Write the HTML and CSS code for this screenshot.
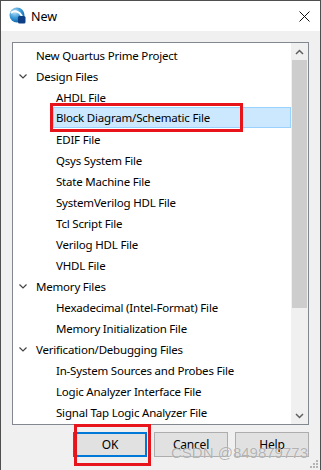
FILE: index.html
```html
<!DOCTYPE html>
<html>
<head>
<meta charset="utf-8">
<link rel="stylesheet" href="styles.css">
</head>
<body>
<div class="window">
  <div class="titlebar">
    <svg class="appicon" width="17" height="17" viewBox="0 0 17 17">
      <defs>
        <radialGradient id="g" cx="0.35" cy="0.3" r="0.8">
          <stop offset="0" stop-color="#bfe3f7"/>
          <stop offset="0.5" stop-color="#3a9ad6"/>
          <stop offset="1" stop-color="#0a5aa0"/>
        </radialGradient>
      </defs>
      <circle cx="8" cy="8" r="7.5" fill="url(#g)"/>
      <path d="M2 6 C5 3 10 4 13 9" stroke="#fff" stroke-width="2" fill="none"/>
      <rect x="9" y="9" width="7.5" height="7.5" rx="1.5" fill="#0d3f86"/>
    </svg>
    <span class="title">New</span>
    <svg class="close" width="11" height="11" viewBox="0 0 11 11">
      <path d="M0.5 0.5 L10.5 10.5 M10.5 0.5 L0.5 10.5" stroke="#111" stroke-width="1"/>
    </svg>
  </div>
  <div class="content">
    <div class="listbox">
      <div class="items">
        <div class="row lvl0"><span class="twisty"></span><span class="label">New Quartus Prime Project</span></div>
        <div class="row lvl0"><span class="twisty open"><svg width="8" height="5" viewBox="0 0 8 5"><path d="M0.5 0.5 L4 4 L7.5 0.5" stroke="#444" fill="none" stroke-width="1.2"/></svg></span><span class="label">Design Files</span></div>
        <div class="row lvl1"><span class="label">AHDL File</span></div>
        <div class="row lvl1"><span class="label selected">Block Diagram/Schematic File</span></div>
        <div class="row lvl1"><span class="label">EDIF File</span></div>
        <div class="row lvl1"><span class="label">Qsys System File</span></div>
        <div class="row lvl1"><span class="label">State Machine File</span></div>
        <div class="row lvl1"><span class="label">SystemVerilog HDL File</span></div>
        <div class="row lvl1"><span class="label">Tcl Script File</span></div>
        <div class="row lvl1"><span class="label">Verilog HDL File</span></div>
        <div class="row lvl1"><span class="label">VHDL File</span></div>
        <div class="row lvl0"><span class="twisty open"><svg width="8" height="5" viewBox="0 0 8 5"><path d="M0.5 0.5 L4 4 L7.5 0.5" stroke="#444" fill="none" stroke-width="1.2"/></svg></span><span class="label">Memory Files</span></div>
        <div class="row lvl1"><span class="label">Hexadecimal (Intel-Format) File</span></div>
        <div class="row lvl1"><span class="label">Memory Initialization File</span></div>
        <div class="row lvl0"><span class="twisty open"><svg width="8" height="5" viewBox="0 0 8 5"><path d="M0.5 0.5 L4 4 L7.5 0.5" stroke="#444" fill="none" stroke-width="1.2"/></svg></span><span class="label">Verification/Debugging Files</span></div>
        <div class="row lvl1"><span class="label">In-System Sources and Probes File</span></div>
        <div class="row lvl1"><span class="label">Logic Analyzer Interface File</span></div>
        <div class="row lvl1"><span class="label">Signal Tap Logic Analyzer File</span></div>
      </div>
      <div class="scrollbar">
        <div class="arrow"><svg width="9" height="6" viewBox="0 0 9 6"><path d="M1 5 L4.5 1.5 L8 5" stroke="#606060" fill="none" stroke-width="1.5"/></svg></div>
        <div class="track"><div class="thumb"></div></div>
        <div class="arrow"><svg width="9" height="6" viewBox="0 0 9 6"><path d="M1 1 L4.5 4.5 L8 1" stroke="#606060" fill="none" stroke-width="1.5"/></svg></div>
      </div>
      <div class="mark mark-item"></div>
    </div>
    <div class="buttons">
      <button class="btn default">OK</button>
      <button class="btn">Cancel</button>
      <button class="btn">Help</button>
    </div>
  </div>
  <div class="mark mark-ok"></div>
  <div class="watermark">CSDN @849879773</div>
  <svg class="grip" width="8" height="8" viewBox="0 0 8 8">
    <g fill="#b4b4b4">
      <rect x="6" y="0" width="2" height="2"/>
      <rect x="3" y="3" width="2" height="2"/><rect x="6" y="3" width="2" height="2"/>
      <rect x="0" y="6" width="2" height="2"/><rect x="3" y="6" width="2" height="2"/><rect x="6" y="6" width="2" height="2"/>
    </g>
  </svg>
</div>
</body>
</html>
```
FILE: styles.css
```css
* { box-sizing: border-box; }
html, body { margin: 0; padding: 0; background: #f0f0f0; }
body { font-family: "Noto Sans", "Open Sans", sans-serif; font-size: 11.5px; letter-spacing: -0.2px; color: #000; }

.window {
  position: relative;
  width: 321px;
  height: 470px;
  border: 1px solid #4f4f4f;
  border-bottom: none;
  background: #f0f0f0;
  overflow: hidden;
}

.titlebar {
  height: 30px;
  background: #fff;
  display: flex;
  align-items: center;
  padding-left: 8px;
}
.appicon { margin-top: -1px; }
.title { margin-left: 5px; font-size: 12.5px; letter-spacing: 0; }
.close { margin-left: auto; margin-right: 10px; }

.content {
  padding: 11px 11px 0 11px;
}

.listbox {
  position: relative;
  height: 383px;
  border: 1px solid #828790;
  background: #fff;
  display: flex;
}

.items {
  flex: 1;
  padding-top: 1px;
}

.row {
  height: 21px;
  display: flex;
  align-items: center;
  white-space: nowrap;
}
.lvl0 { padding-left: 6px; }
.lvl1 { padding-left: 40px; }
.twisty { width: 8px; height: 21px; display: flex; align-items: center; margin-right: 7px; padding-top: 1px; }
.twisty svg { display: block; }
.label { padding-left: 3px; height: 21px; line-height: 21px; padding-top: 1px; }
.lvl0 .label { padding-left: 2px; }
.label.selected {
  flex: 1;
  background: #cce8ff;
  border: 1px solid #99d1ff;
  padding-left: 2px;
  padding-top: 0;
  line-height: 20px;
}

.scrollbar {
  width: 17px;
  background: #f0f0f0;
  display: flex;
  flex-direction: column;
}
.arrow {
  height: 17px;
  display: flex;
  align-items: center;
  justify-content: center;
}
.track { flex: 1; }
.thumb {
  margin: 0 1px;
  height: 248px;
  background: #cdcdcd;
}

.buttons {
  display: flex;
  justify-content: flex-end;
  gap: 7px;
  margin-top: 7px;
}
.btn {
  width: 74px;
  height: 25px;
  font-family: "Noto Sans", "Open Sans", sans-serif;
  font-size: 12px;
  letter-spacing: -0.2px;
  color: #000;
  background: #e1e1e1;
  border: 1px solid #adadad;
  padding: 0;
}
.btn.default {
  border: 1px solid #0078d7;
  box-shadow: inset 0 0 0 1px #0078d7;
}

.mark {
  position: absolute;
  border: 3px solid #e8141c;
}
.mark-item { left: 37px; top: 60px; width: 193px; height: 29px; }
.mark-ok { left: 73px; top: 423px; width: 77px; height: 42px; }

.watermark {
  position: absolute;
  left: 170px;
  top: 443px;
  white-space: nowrap;
  font-family: "Liberation Sans", sans-serif;
  font-size: 15px;
  line-height: 17px;
  color: rgba(110, 110, 110, 0.5);
  text-shadow: 0 0 1px rgba(255,255,255,0.9);
  letter-spacing: 0;
}

.grip { position: absolute; right: 2px; bottom: 2px; }
```
